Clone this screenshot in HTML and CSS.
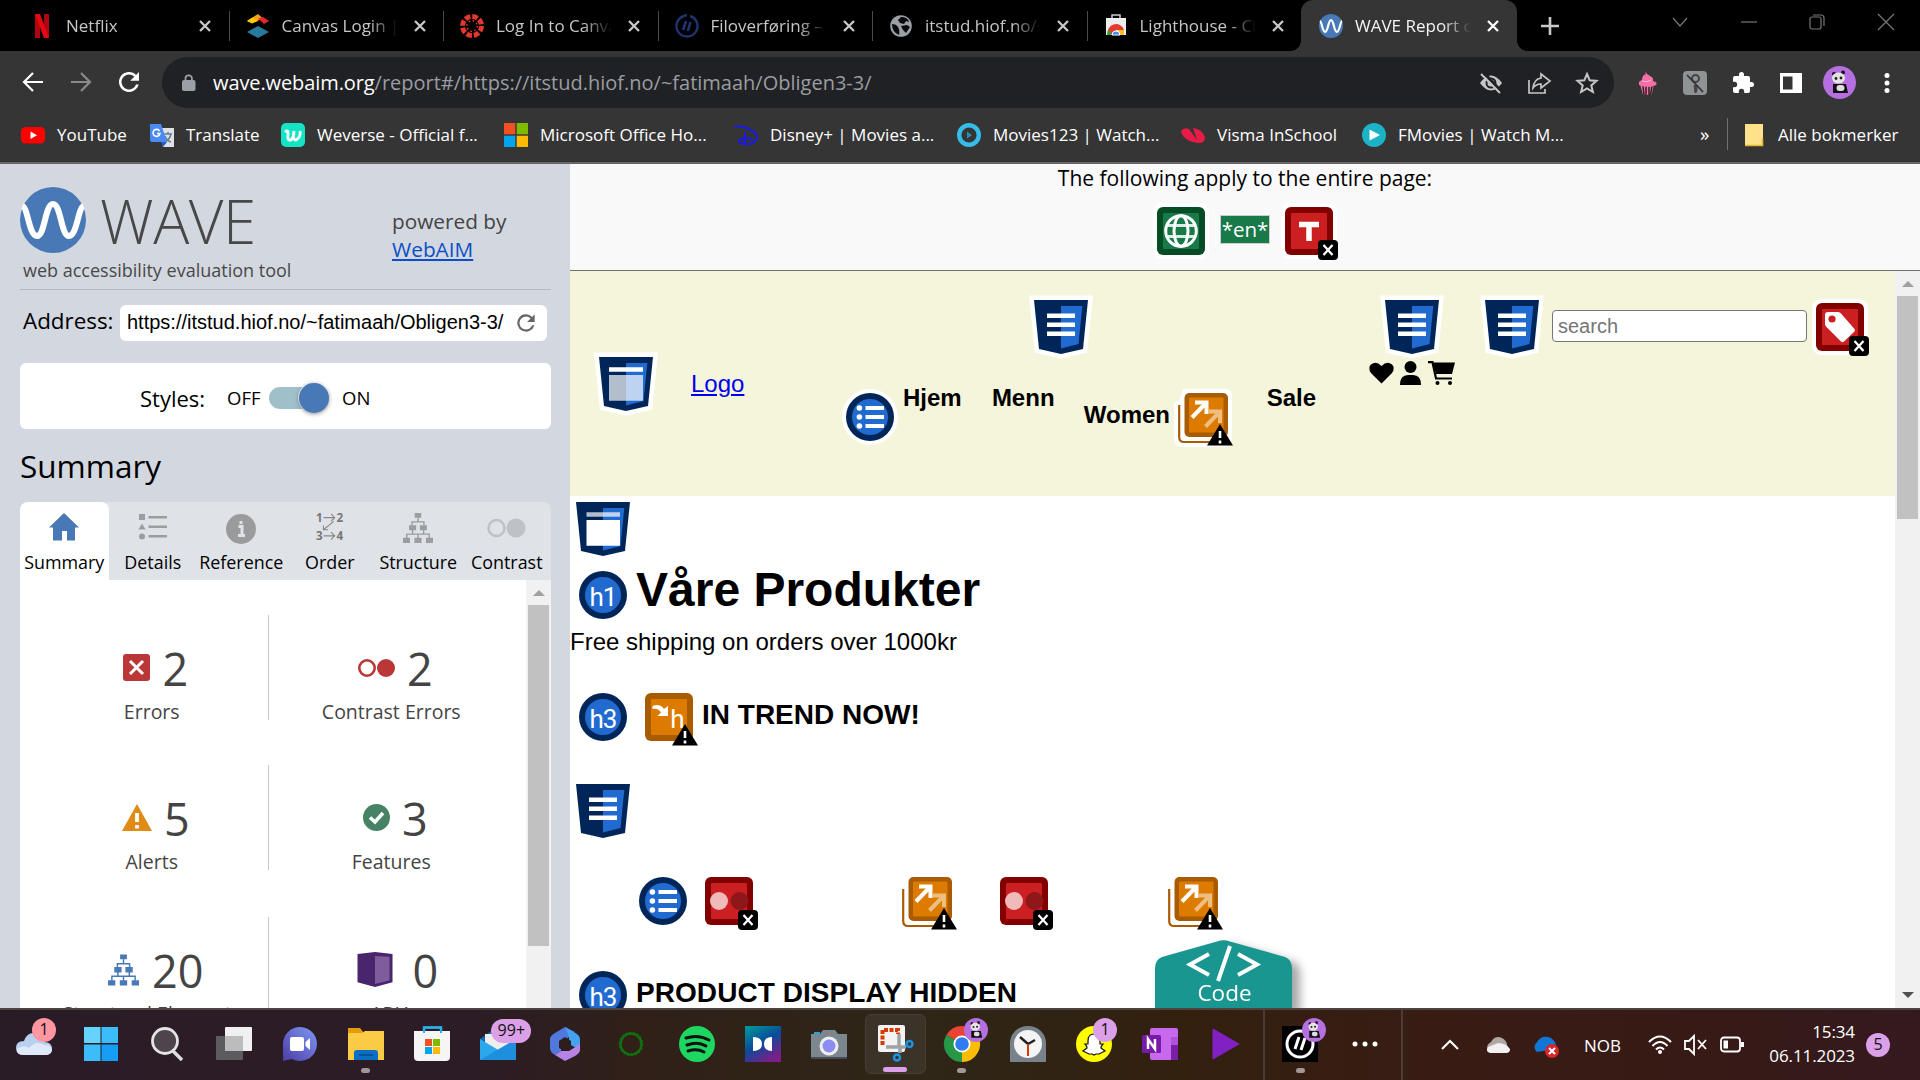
FILE: index.html
```html
<!DOCTYPE html>
<html lang="en">
<head>
<meta charset="utf-8">
<title>WAVE Report</title>
<link rel="stylesheet" href="styles.css">
</head>
<body>
<svg class="defs" width="0" height="0" aria-hidden="true">
  <symbol id="shield" viewBox="0 0 54 54" overflow="visible">
    <path d="M0 0H54L49 49L27 54L5 49Z" fill="#fff" stroke="#fff" stroke-width="9"/>
    <path d="M0 0H54L49 49L27 54L5 49Z" fill="#002659"/>
    <path d="M27 6H48.3L44.5 44L27 48.5Z" fill="#216bd0"/>
  </symbol>
  <symbol id="nav" viewBox="0 0 54 54" overflow="visible">
    <use href="#shield" width="54" height="54"/>
    <path d="M13 15.8H41M13 24.8H41M13 33.8H41" stroke="#fff" stroke-width="4.6"/>
  </symbol>
  <symbol id="list" viewBox="0 0 48 48" overflow="visible">
    <circle cx="24" cy="24" r="28" fill="#fff"/><circle cx="24" cy="24" r="24" fill="#002659"/><circle cx="24" cy="24" r="18" fill="#216bd0"/>
    <g fill="#fff"><circle cx="13.4" cy="15" r="2.8"/><circle cx="13.4" cy="24" r="2.8"/><circle cx="13.4" cy="33" r="2.8"/></g>
    <path d="M19.5 15H38M19.5 24H38M19.5 33H38" stroke="#fff" stroke-width="4"/>
  </symbol>
  <symbol id="warn" viewBox="0 0 26 22" overflow="visible">
    <path d="M13 0L26 21.5H0Z" fill="#000"/><path d="M13 7V14M13 16.4V19.4" stroke="#fff" stroke-width="2.6"/>
  </symbol>
  <symbol id="err" viewBox="0 0 20 20" overflow="visible">
    <rect width="20" height="20" rx="4" fill="#000"/><path d="M5.5 5L14.5 15M14.5 5L5.5 15" stroke="#fff" stroke-width="2.3"/>
  </symbol>
  <symbol id="red" viewBox="0 0 48 48" overflow="visible">
    <rect x="-4" y="-4" width="56" height="56" rx="9" fill="#fff"/><rect width="48" height="48" rx="6" fill="#820000"/><rect x="6" y="6" width="36" height="36" rx="1" fill="#cc1f22"/>
  </symbol>
  <symbol id="contrast" viewBox="0 0 48 48" overflow="visible">
    <use href="#red" width="48" height="48"/>
    <circle cx="14" cy="24" r="9" fill="#f0babb"/><circle cx="34.5" cy="24" r="9" fill="#8d1719"/>
    <use href="#err" x="33" y="33" width="20" height="20"/>
  </symbol>
  <symbol id="link" viewBox="0 0 50 50" overflow="visible">
    <path d="M5 -4H47Q54 -4 54 3V40Q54 54 46 54H4Q-4 54 -4 46V12Q-4 8 1 8Z" fill="#fff"/>
    <path d="M1.2 12V44Q1.2 49 6 49H44" fill="none" stroke="#a85b00" stroke-width="2.2"/>
    <rect x="6.5" width="43.5" height="44" rx="5" fill="#a85b00"/><rect x="11" y="4.5" width="34.5" height="35" rx="1" fill="#dd7b00"/>
    <g fill="none" stroke="#fff" stroke-width="4"><path opacity=".5" d="M31 18.5H42V30M42 18.5L27.5 33.5"/><path d="M17 9.5H28.5V21M28.5 9.5L14 24.5"/></g>
    <use href="#warn" x="29" y="31" width="26" height="22"/>
  </symbol>
  <symbol id="tree" viewBox="0 0 32 32">
    <path d="M12.5 0h7v5h-7zM6.5 13h7.5v5.5H6.5zM18 13h7.5v5.5H18zM0 26.5h7.5V32H0zM12.2 26.5h7.6V32h-7.6zM24.5 26.5H32V32h-7.500z" fill="currentColor"/>
    <path d="M16 5V9.500M9.700 13V9.500H22.300V13M10.200 18V22.500M22 18V22.500M4 27V22.500H28V27M16 22.500V27" stroke="currentColor" stroke-width="1.500" fill="none"/>
  </symbol>
  <symbol id="wavelogo" viewBox="0 0 66 66">
    <circle cx="33" cy="33" r="33" fill="#4878b6"/>
    <path d="M2.500 19C8 21 9 49 17 49S25 17 33 17S41 49 49 49S58 21 63.500 19" fill="none" stroke="#fff" stroke-width="6"/>
  </symbol>
  <symbol id="panda" viewBox="0 0 33 33">
    <circle cx="16.500" cy="16.500" r="16.500" fill="#b56fe0"/>
    <g fill="#111"><circle cx="11" cy="8" r="2"/><circle cx="20" cy="6.500" r="2"/><path d="M10 18h13l2 9h-15z"/></g>
    <ellipse cx="15.500" cy="12" rx="6.500" ry="5.500" fill="#e4e4e0"/><rect x="13.500" y="19" width="8" height="6" rx="3" fill="#ddd"/>
    <g fill="#222"><circle cx="13" cy="12.500" r="1.400"/><circle cx="18" cy="12" r="1.400"/></g>
  </symbol>
  <symbol id="reload" viewBox="0 0 24 24"><path d="M17.650 6.350A8 8 0 1 0 19.730 14h-2.080A6 6 0 1 1 12 6c1.660 0 3.140.69 4.220 1.780L13 11h7V4z" fill="currentColor"/></symbol>
  <symbol id="x" viewBox="0 0 14 14"><path d="M2 2L12 12M12 2L2 12" stroke="currentColor" stroke-width="2.300"/></symbol>
  <symbol id="hiof" viewBox="0 0 24 24"><path d="M9 2A10.500 10.500 0 1 0 15 2" fill="none" stroke="currentColor" stroke-width="2.400"/><path d="M9 1.800A10.500 10.500 0 0 1 12 1.300M11 7L8 16M15.500 8L12.800 17" stroke="currentColor" stroke-width="2.600" fill="none"/></symbol>
</svg>

<div class="screen">
  <header class="tabs">
    <div class="tab"><svg class="fav" viewBox="0 0 24 24"><path d="M5 0h5v24H5zM14 0h5v24h-5z" fill="#b1060f"/><path d="M5 0h5l9 24h-5z" fill="#e50914"/></svg><span class="title">Netflix</span><svg class="close"><use href="#x"/></svg></div>
    <div class="tab sep"><svg class="fav" viewBox="0 0 24 24"><path d="M1 7L12 0l5 4.500L6 9z" fill="#f9a11b"/><path d="M1 7l5.500-3.500L12 7 6 9.500z" fill="#fc0"/><path d="M12 4.500L17 3l6 4-5 3z" fill="#e8262b"/><path d="M12 12l11 6-11 6-11-6z" fill="#287a9f"/></svg><span class="title">Canvas Login | In</span><svg class="close"><use href="#x"/></svg></div>
    <div class="tab sep"><svg class="fav" viewBox="0 0 24 24"><circle cx="12" cy="12" r="9.500" fill="none" stroke="#e4382e" stroke-width="5" stroke-dasharray="5.500 1.960"/><circle cx="12" cy="12" r="5.200" fill="none" stroke="#e4382e" stroke-width="1.500" stroke-dasharray="1.500 2.580"/></svg><span class="title">Log In to Canvas</span><svg class="close"><use href="#x"/></svg></div>
    <div class="tab sep"><svg class="fav navy"><use href="#hiof"/></svg><span class="title">Filoverføring – H</span><svg class="close"><use href="#x"/></svg></div>
    <div class="tab sep"><svg class="fav" viewBox="0 0 24 24"><circle cx="12" cy="12" r="10.800" fill="#9aa0a6"/><path d="M3 10q4 0 6 3t1 8q-7-3-7-11zM12 3q7 0 8 5l-3-1-2 3-4-1-2-3zM12 12l6-1 3 2-4 6-3-3z" fill="#0a0a0a"/></svg><span class="title">itstud.hiof.no/~f</span><svg class="close"><use href="#x"/></svg></div>
    <div class="tab sep"><svg class="fav" viewBox="0 0 24 24"><path d="M8 4V1h8v3" fill="none" stroke="#ccc" stroke-width="1.500"/><path d="M2 4h20v17H2z" fill="#eee"/><path d="M4 21a8 8 0 0 1 16-5H12l-3 5z" fill="#e33b2e"/><path d="M4 16l5 5H3z" fill="#2ba24c"/><path d="M14 16h6v5h-6z" fill="#fbc116"/><path d="M8 21a4 4 0 0 1 8 0z" fill="#4285f4" stroke="#fff"/></svg><span class="title">Lighthouse - Chr</span><svg class="close"><use href="#x"/></svg></div>
    <div class="tab active"><svg class="fav"><use href="#wavelogo"/></svg><span class="title">WAVE Report of</span><svg class="close"><use href="#x"/></svg></div>
    <svg class="plus" viewBox="0 0 18 18"><path d="M9 0V18M0 9H18" stroke="#c8c8c8" stroke-width="2.600"/></svg>
    <div class="winctl">
      <svg viewBox="0 0 16 16"><path d="M1 4L8 12L15 4"/></svg>
      <svg viewBox="0 0 16 16"><path d="M0 8H16"/></svg>
      <svg viewBox="0 0 16 16"><rect x="1" y="3" width="11" height="12" rx="2"/><path d="M4 1H12Q15 1 15 4V12"/></svg>
      <svg viewBox="0 0 16 16"><path d="M0 0L16 16M16 0L0 16"/></svg>
    </div>
  </header>

  <div class="toolbar">
    <div class="navbtns">
      <svg viewBox="0 0 24 24"><path d="M22 12H3M12 3L3 12L12 21"/></svg>
      <svg class="dim" viewBox="0 0 24 24"><path d="M2 12H21M12 3L21 12L12 21"/></svg>
      <svg class="rl"><use href="#reload"/></svg>
    </div>
    <div class="omnibox">
      <svg class="lock" viewBox="0 0 14 18"><rect y="6" width="13.500" height="11" rx="2" fill="#9aa0a6"/><path d="M3.500 7V4.500a3.200 3.200 0 0 1 6.400 0V7" fill="none" stroke="#9aa0a6" stroke-width="1.800"/></svg>
      <span class="url"><b>wave.webaim.org</b>/report#/https://itstud.hiof.no/~fatimaah/Obligen3-3/</span>
      <div class="omni-icons">
        <svg viewBox="0 0 24 24"><path d="M1 12Q12-3 23 12Q12 27 1 12Z" fill="#c4c7c5"/><circle cx="12" cy="12" r="4.500" fill="none" stroke="#202124" stroke-width="2"/><path d="M4 1L23 21" stroke="#202124" stroke-width="3"/><path d="M2 3L21 22" stroke="#c4c7c5" stroke-width="2"/></svg>
        <svg viewBox="0 0 24 24"><path d="M2 9V22H18V18M14 3L23 10L14 17V13Q9 13 6 17Q7 8 14 7Z" fill="none" stroke="#c4c7c5" stroke-width="1.700"/></svg>
        <svg viewBox="0 0 24 24"><path d="M12 3L14.700 9.300L21.500 9.900L16.300 14.400L17.900 21L12 17.500L6.100 21L7.700 14.400L2.500 9.900L9.300 9.300Z" fill="none" stroke="#c4c7c5" stroke-width="2"/></svg>
      </div>
    </div>
    <div class="exts">
      <svg viewBox="0 0 24 24"><path d="M5 13h14l-2.500 11H8z" fill="#f46fa6"/><path d="M8 15l1 9M11 15v9M14 15v9M17 15l-1.500 9" stroke="#2b2226" stroke-width="1.500"/><path d="M10 0q2 4 5 5q4 2 3 5q5 1 3 4q-8 4-17 0q-1-4 3-5q0-5 4-6z" fill="#f46fa6"/><path d="M7 10q5 2 9-1" stroke="#fbd" fill="none"/></svg>
      <svg viewBox="0 0 24 24"><rect width="24" height="24" rx="4" fill="#8f9394"/><circle cx="12.500" cy="7.500" r="3.500" fill="none" stroke="#444" stroke-width="2"/><path d="M10.500 14h4v5l-1 3h-2z" fill="#444"/><path d="M4 4L20 21" stroke="#333" stroke-width="1.800"/></svg>
      <svg viewBox="0 0 24 24"><path d="M20.500 11H19V7a2 2 0 0 0-2-2h-4V3.500a2.500 2.500 0 0 0-5 0V5H4a2 2 0 0 0-2 2v3.800h1.500a2.700 2.700 0 0 1 0 5.400H2V20a2 2 0 0 0 2 2h3.800v-1.500a2.700 2.700 0 0 1 5.400 0V22H17a2 2 0 0 0 2-2v-4h1.500a2.500 2.500 0 0 0 0-5z" fill="#fff"/></svg>
      <svg viewBox="0 0 24 24"><path d="M1 2H23V22H1Z" fill="#fff"/><path d="M4 5.500H13.500V18.500H4Z" fill="#353535"/></svg>
      <svg class="avatar"><use href="#panda"/></svg>
      <svg viewBox="0 0 24 24"><g fill="#fff"><circle cx="12" cy="4.500" r="2.500"/><circle cx="12" cy="12" r="2.500"/><circle cx="12" cy="19.500" r="2.500"/></g></svg>
    </div>
  </div>

  <div class="bookmarks">
    <div class="bm"><svg viewBox="0 0 24 24"><rect y="4" width="24" height="16.500" rx="4.500" fill="#f00"/><path d="M9.500 8.500L16 12.200L9.500 16z" fill="#fff"/></svg>YouTube</div>
    <div class="bm"><svg viewBox="0 0 24 24"><path d="M8 5h16v19H13z" fill="#dfe1e5"/><path d="M14 11h8M18 9v2M21 11q-1 5-6 8M15 13q2 5 6 6" stroke="#5f7d95" fill="none" stroke-width="1.500"/><path d="M0 1h11l6 18H2q-2 0-2-2z" fill="#4a8af4"/><path d="M11 19h6l-4 5z" fill="#2a56c6"/><path d="M9.500 8A3.500 3.500 0 1 0 10 10.500H7" fill="none" stroke="#fff" stroke-width="1.600"/></svg>Translate</div>
    <div class="bm"><svg viewBox="0 0 24 24"><rect width="24" height="24" rx="5" fill="#14e3c5"/><path d="M4 9Q8 6 7 12T10 17Q13 14 13 8Q11 17 15 17Q20 14 19 8" fill="none" stroke="#fff" stroke-width="2.800"/></svg>Weverse - Official f...</div>
    <div class="bm"><svg viewBox="0 0 24 24"><path d="M0 0h11.300v11.300H0z" fill="#f25022"/><path d="M12.700 0H24v11.300H12.700z" fill="#7fba00"/><path d="M0 12.700h11.300V24H0z" fill="#00a4ef"/><path d="M12.700 12.700H24V24H12.700z" fill="#ffb900"/></svg>Microsoft Office Ho...</div>
    <div class="bm"><svg viewBox="0 0 24 24"><path d="M1 5Q2 2 10 4Q23 8 23 15Q20 24 6 20Q2 16 12 15Q18 15 18 18M11 9V22" fill="none" stroke="#1a1ae6" stroke-width="2"/></svg>Disney+ | Movies a...</div>
    <div class="bm"><svg viewBox="0 0 24 24"><circle cx="12" cy="12" r="9.800" fill="none" stroke="#35bce8" stroke-width="4.400"/><path d="M10 8.500L15 12l-5 3.500z" fill="#2b8db0"/></svg>Movies123 | Watch...</div>
    <div class="bm"><svg viewBox="0 0 24 24"><path d="M0 8Q3 4 8 6L16 17L12 5Q21 6 24 14Q24 20 18 20Q7 19 2 13Q0 10 0 8Z" fill="#e81c46"/></svg>Visma InSchool</div>
    <div class="bm"><svg viewBox="0 0 24 24"><circle cx="12" cy="12" r="12" fill="#1cb3c8"/><path d="M7.500 6.500L18 12L7.500 17.500z" fill="#fff"/></svg>FMovies | Watch M...</div>
    <div class="more">»</div>
    <div class="bm all"><svg viewBox="0 0 24 24"><path d="M3 1h18v14l-1 1v7H3z" fill="#ffe28a"/><path d="M3 22.500H20.500V15" fill="none" stroke="#e8b931" stroke-width="1.600"/></svg>Alle bokmerker</div>
  </div>

  <main class="main">
    <aside class="side">
      <div class="brand">
        <svg class="logo"><use href="#wavelogo"/></svg>
        <div class="wordmark">WAVE</div>
        <div class="powered">powered by<br><a>WebAIM</a></div>
      </div>
      <div class="tagline">web accessibility evaluation tool</div>
      <div class="address"><label>Address:</label><div class="field"><span>https://itstud.hiof.no/~fatimaah/Obligen3-3/</span><svg><use href="#reload"/></svg></div></div>
      <div class="styles"><span class="lbl">Styles:</span><span class="off">OFF</span><span class="switch"><i></i></span><span class="on">ON</span></div>
      <h2 class="heading">Summary</h2>
      <nav class="wtabs">
        <div class="wtab sel"><svg viewBox="0 0 30 28"><path d="M15 0L30 14.500H26V27.500H18V18H13V27.500H4V14.500H0Z" fill="#4878b6"/></svg>Summary</div>
        <div class="wtab"><svg viewBox="0 0 30 28"><g fill="#9b9da0"><path d="M1 1h6v6H1zM4 10.500l3.500 6h-7z"/><circle cx="4" cy="23.500" r="3"/><path d="M10.500 3H29v2.500H10.500zM10.500 12.500H29V15H10.500zM10.500 22H29v2.500H10.500z"/></g></svg>Details</div>
        <div class="wtab"><svg class="info" viewBox="0 0 30 30"><circle cx="15" cy="15" r="15" fill="#999b9d"/><path d="M12.500 12.500H16V21M12 21.500H19M15 7V10" stroke="#dfe3e8" stroke-width="3" fill="none"/></svg>Reference</div>
        <div class="wtab"><svg class="ord" viewBox="0 0 30 30"><g font-family="Open Sans, sans-serif" font-weight="700" font-size="12.500" fill="#777"><text x="0" y="9.500">1</text><text x="22" y="9.500">2</text><text x="0" y="29">3</text><text x="22" y="29">4</text></g><path d="M8 5H20M16 1L20 5L16 9M8 24.500H20M16 20.500L20 24.500L16 28.500M19 9L8 18M8 13.500V18H13" stroke="#888" stroke-width="1.200" fill="none"/></svg>Order</div>
        <div class="wtab"><svg class="grey"><use href="#tree"/></svg>Structure</div>
        <div class="wtab"><svg class="wide" viewBox="0 0 39 20"><circle cx="9.500" cy="10" r="8" fill="none" stroke="#bec1c5" stroke-width="2.500"/><circle cx="29" cy="10" r="9.500" fill="#bec1c5"/></svg>Contrast</div>
      </nav>
      <div class="panel">
        <div class="stats">
          <div class="stat"><p><svg viewBox="0 0 27 27"><rect width="27" height="27" rx="3" fill="#ba3637"/><path d="M7 7L20 20M20 7L7 20" stroke="#fff" stroke-width="3"/></svg>2</p><span>Errors</span></div>
          <div class="stat"><p><svg class="w37" viewBox="0 0 37 18"><circle cx="9" cy="9" r="7.700" fill="none" stroke="#ba3637" stroke-width="2.600"/><circle cx="28" cy="9" r="9" fill="#ba3637"/></svg>2</p><span>Contrast Errors</span></div>
          <div class="stat"><p><svg class="w30" viewBox="0 0 30 27"><path d="M15 0L30 27H0Z" fill="#e08b14"/><path d="M15 9V18M15 21V24.500" stroke="#fff" stroke-width="3.800"/></svg>5</p><span>Alerts</span></div>
          <div class="stat"><p><svg viewBox="0 0 27 27"><circle cx="13.500" cy="13.500" r="13.500" fill="#458364"/><path d="M7 13.500L12 18L20 9" stroke="#fff" stroke-width="3.500" fill="none"/></svg>3</p><span>Features</span></div>
          <div class="stat third"><p><svg class="w32 blue"><use href="#tree"/></svg>20</p><span>Structural Elements</span></div>
          <div class="stat third"><p><svg class="w36" viewBox="0 0 36 36"><path d="M0 2L18 0L36 2V31L18 36L0 31Z" fill="#49256d"/><path d="M18 4L33 5V29L18 33Z" fill="#7f5c9c"/></svg>0</p><span>ARIA</span></div>
        </div>
        <div class="scroll"><i class="up"></i><div class="thumb"></div></div>
      </div>
    </aside>

    <section class="report">
      <div class="banner">
        <p>The following apply to the entire page:</p>
        <div class="row">
          <svg class="i48" viewBox="0 0 48 48"><rect x="-4" y="-4" width="56" height="56" rx="9" fill="#fff"/><rect width="48" height="48" rx="6" fill="#064d25"/><rect x="6" y="6" width="36" height="36" rx="1" fill="#187a48"/><g fill="none" stroke="#fff" stroke-width="3"><circle cx="24" cy="24" r="15.300"/><ellipse cx="24" cy="24" rx="7" ry="15.300"/><path d="M10.500 18.500H37.500M10.500 29.500H37.500" opacity=".85"/></g></svg>
          <span class="lang">*en*</span>
          <svg class="i48" viewBox="0 0 48 48"><use href="#red" width="48" height="48"/><path d="M14 17.500H34M24 17.500V34" stroke="#fff" stroke-width="5.500"/><use href="#err" x="33" y="33" width="20" height="20"/></svg>
        </div>
      </div>
      <div class="view">
        <div class="page">
          <div class="site-header">
            <svg class="i54 h-shield" viewBox="0 0 54 54"><use href="#shield" width="54" height="54"/><path d="M10 12.500H44" stroke="#fff" stroke-width="4.600"/><path d="M10 18H44V43.700H10Z" fill="#fff" opacity=".7"/></svg>
            <a class="site-logo">Logo</a>
            <div class="nav">
              <svg class="i54"><use href="#nav"/></svg>
              <div class="menu">
                <svg class="i48"><use href="#list"/></svg><b class="m1">Hjem</b><b class="m2">Menn</b><b class="m3">Women</b><svg class="i50"><use href="#link"/></svg><b class="m4">Sale</b>
              </div>
            </div>
            <div class="tools">
              <svg class="i54"><use href="#nav"/></svg>
              <div class="glyphs">
                <svg viewBox="0 0 25 24"><path d="M12.500 22.500L2 12Q-1.500 7 2 3.500Q7-.500 12.500 5Q18-.500 23 3.500Q26.500 7 23 12Z"/></svg>
                <svg class="g2" viewBox="0 0 21 24"><circle cx="10.500" cy="6" r="6"/><path d="M0 24Q0 14 8 14H13Q21 14 21 24Z"/></svg>
                <svg class="g3" viewBox="0 0 27 24"><path d="M5 1.500H27L24 13H8Z"/><path d="M0 1.200H4.500L8 17.500H24" fill="none" stroke="#000" stroke-width="2.200"/><circle cx="9.500" cy="22" r="2"/><circle cx="22" cy="22" r="2"/></svg>
              </div>
            </div>
            <svg class="i54 s-shield"><use href="#nav"/></svg>
            <div class="search">search</div>
            <svg class="i48 tag" viewBox="0 0 48 48"><use href="#red" width="48" height="48"/><path d="M9 12Q9 9 12 9H22Q24 9 25 10.500L38.500 26Q39.500 27 38.500 28.500L28 38.500Q26.500 40 25 38.500L10.500 24Q9 22.500 9 21Z" fill="#fff"/><circle cx="16" cy="16" r="3.600" fill="#cc1f22"/><use href="#err" x="33" y="33" width="20" height="20"/></svg>
          </div>
          <div class="content">
            <svg class="i54 c-shield" viewBox="0 0 54 54"><use href="#shield" width="54" height="54"/><path d="M10.500 12.500H44" stroke="#fff" stroke-width="4.600" opacity=".7"/><path d="M10.500 18H44V43.700H10.500Z" fill="#fff"/></svg>
            <div class="line l1"><svg class="i48 hx" viewBox="0 0 48 48"><circle cx="24" cy="24" r="24" fill="#002659"/><circle cx="24" cy="24" r="18" fill="#216bd0"/><text x="24" y="34.500" class="hn">h1</text></svg><h1>Våre Produkter</h1></div>
            <p class="ship">Free shipping on orders over 1000kr</p>
            <div class="line l2"><svg class="i48 hx" viewBox="0 0 48 48"><circle cx="24" cy="24" r="24" fill="#002659"/><circle cx="24" cy="24" r="18" fill="#216bd0"/><text x="24" y="34.500" class="hn">h3</text></svg><svg class="i48" viewBox="0 0 48 48"><rect width="48" height="48" rx="6" fill="#a85b00"/><rect x="6" y="6" width="36" height="36" rx="1" fill="#dd7b00"/><text x="32" y="34.500" class="hn">h</text><path d="M7.500 13Q15 10 19 16L23 13V23H12.500L16 19.500Q13 14.500 7.500 16Z" fill="#fff"/><use href="#warn" x="27" y="31" width="26" height="22"/></svg><h3>IN TREND NOW!</h3></div>
            <svg class="i54 c-nav"><use href="#nav"/></svg>
            <div class="issues"><svg class="i48"><use href="#list"/></svg><svg class="i48 a1"><use href="#contrast"/></svg><svg class="i50 a2"><use href="#link"/></svg><svg class="i48 a3"><use href="#contrast"/></svg><svg class="i50 a4"><use href="#link"/></svg></div>
            <div class="line l3"><svg class="i48 hx" viewBox="0 0 48 48"><circle cx="24" cy="24" r="24" fill="#002659"/><circle cx="24" cy="24" r="18" fill="#216bd0"/><text x="24" y="34.500" class="hn">h3</text></svg><h3>PRODUCT DISPLAY HIDDEN</h3></div>
          </div>
        </div>
        <div class="vscroll"><i class="up"></i><div class="thumb"></div><i class="down"></i></div>
      </div>
      <div class="code"><svg viewBox="0 0 137 70"><path d="M0 70V28Q0 20 7 17L62 1.500Q68.500-1 75 1.500L130 17Q137 20 137 28V70Z" fill="#18968f"/><path d="M54 14L35 24.500L54 35M83 14L102 24.500L83 35M75 6L63 41" fill="none" stroke="#fff" stroke-width="4"/></svg><span>Code</span></div>
    </section>
  </main>

  <footer class="taskbar">
    <div class="apps">
      <div class="app weather"><svg viewBox="0 0 36 36"><path d="M8 29Q0 29 0 22Q0 15 8 15Q11 6 19 7Q27 8 28 16Q36 16 36 23Q36 29 29 29Z" fill="#b9cff0"/><path d="M8 29Q0 29 1 23Q8 18 13 22Q20 14 28 19Q36 19 36 24Q35 29 29 29Z" fill="#dfe9f9"/></svg><b class="badge pink">1</b></div>
      <div class="app"><svg viewBox="0 0 36 36"><g fill="#3cbcfb"><path d="M1 1H17.500V17H1z" fill="#64d3fd"/><path d="M18.500 1H35V17H18.500z"/><path d="M1 18.500H17.500V35H1z"/><path d="M18.500 18.500H35V35H18.500z" fill="#169df6"/></g></svg></div>
      <div class="app"><svg viewBox="0 0 36 36"><circle cx="16" cy="15" r="12.500" fill="#4d444c" stroke="#e4e4e4" stroke-width="2.800"/><path d="M24 25L33 34" stroke="#ddd" stroke-width="3.500"/></svg></div>
      <div class="app"><svg viewBox="0 0 36 36"><rect y="10" width="27" height="24" rx="1" fill="#5c5b5d"/><rect x="9" y="1" width="27" height="24" rx="1" fill="#f0f0f0"/><path d="M9 10H27V25H9z" fill="#bcbcbc"/></svg></div>
      <div class="app"><svg viewBox="0 0 36 36"><defs><linearGradient id="tg" x1="1" x2="0" y2="1"><stop stop-color="#7d9af0"/><stop offset=".6" stop-color="#6160c8"/><stop offset="1" stop-color="#4a3fa0"/></linearGradient></defs><path d="M18 1A17 17 0 1 1 10 33L1 35V18A17 17 0 0 1 18 1Z" fill="url(#tg)"/><rect x="8" y="11" width="14" height="14" rx="2" fill="#fff"/><path d="M23.500 16L28 12V24L23.500 20Z" fill="#fff"/></svg></div>
      <div class="app run"><svg viewBox="0 0 36 36"><path d="M0 2H12L16 7H0z" fill="#e29c0c"/><path d="M0 7L14 7L17 5H36V34H0z" fill="#fccb45"/><path d="M6 34V27Q6 24 9 24H27Q30 24 30 27V34z" fill="#0b70c4"/><path d="M11 29H25" stroke="#064a8a" stroke-width="1.500"/></svg></div>
      <div class="app"><svg viewBox="0 0 36 36"><path d="M10 8V1.500H27V8" fill="none" stroke="#27b1ee" stroke-width="2.500"/><path d="M0 5H36V31Q36 35 32 35H4Q0 35 0 31z" fill="#f5f5f5"/><path d="M10 7V1.500H27V7" fill="none" stroke="#27b1ee" stroke-width="2"/><path d="M11 13h7v7h-7z" fill="#f25022"/><path d="M19 13h7v7h-7z" fill="#7fba00"/><path d="M11 21h7v7h-7z" fill="#00a4ef"/><path d="M19 21h7v7h-7z" fill="#ffb900"/></svg></div>
      <div class="app"><svg viewBox="0 0 36 36"><path d="M0 13L18 0L36 13V34H0z" fill="#0f66b4"/><path d="M5 8H31V22L18 27L5 18z" fill="#eee"/><path d="M0 13L20 25L36 17V34H0z" fill="#2ba8ec"/><path d="M0 34L36 13V34z" fill="#1d8fdd"/></svg><b class="badge wide99">99+</b></div>
      <div class="app"><svg viewBox="0 0 36 36"><path d="M18 1L28 6L22 11Q14 16 14 25L8 29Q3 26 3 22V13Q3 10 8 7z" fill="#5178dd"/><path d="M18 1L30 8Q33 10 33 14V24L22 18V11z" fill="#43a3ee"/><path d="M14 25L22 25L33 18V24Q33 27 28 30L18 35L8 29z" fill="#b783e6"/><path d="M18 11L24 15V22L18 25L12 22V15z" fill="#2b1e1c"/></svg></div>
      <div class="app"><svg viewBox="0 0 36 36"><circle cx="18" cy="18" r="10.500" fill="none" stroke="#107010" stroke-width="2.500"/><circle cx="18" cy="18" r="11.500" fill="none" stroke="#107010" stroke-width="1.500" stroke-dasharray="2 2"/></svg></div>
      <div class="app"><svg viewBox="0 0 36 36"><circle cx="18" cy="18" r="18" fill="#1ed760"/><path d="M7 12Q19 8 30 14M8 19Q19 15 27 20M9 25Q18 22 25 26" fill="none" stroke="#111" stroke-width="3" stroke-linecap="round"/></svg></div>
      <div class="app"><svg viewBox="0 0 36 36"><defs><linearGradient id="dg" x2=".6" y2="1"><stop stop-color="#009e9a"/><stop offset=".55" stop-color="#0a4a9a"/><stop offset="1" stop-color="#7a1f8a"/></linearGradient></defs><path d="M0 0H36V36H0z" fill="url(#dg)"/><path d="M8 11Q17 11 17 18T8 25zM27 11Q19 11 19 18T27 25z" fill="#fff"/></svg></div>
      <div class="app"><svg viewBox="0 0 36 36"><path d="M3 6H9V10H3z" fill="#28a2e0"/><path d="M0 8H9L12 4H24L27 8H36V33H0z" fill="#7c868f"/><path d="M0 31H36V33H0z" fill="#444b52"/><circle cx="18" cy="20" r="9.500" fill="#eee"/><circle cx="18" cy="20" r="6.500" fill="#8c8df0"/></svg></div>
      <div class="app on"><svg viewBox="0 0 36 36"><rect width="27" height="27" rx="2" fill="#f3f3f3"/><path d="M4.500 20V5H20V9" fill="none" stroke="#d83b01" stroke-width="4" stroke-dasharray="4 1.500"/><path d="M21 9V22L28 22M8 22H22V28" fill="none" stroke="#9ea3a8" stroke-width="3.500"/><g fill="none" stroke="#1b93e0" stroke-width="2.500"><circle cx="31.500" cy="19" r="3"/><circle cx="19" cy="32.500" r="3"/></g></svg></div>
      <div class="app run"><svg viewBox="0 0 36 36"><path d="M18 18L2.400 9A18 18 0 0 1 33.600 9z" fill="#ea4335"/><path d="M18 18L33.600 9A18 18 0 0 1 18 36z" fill="#fbbc05"/><path d="M18 18V36A18 18 0 0 1 2.400 9z" fill="#279847"/><circle cx="18" cy="18" r="8.500" fill="#fff"/><circle cx="18" cy="18" r="6.800" fill="#2f7cf0"/></svg><svg class="pb"><use href="#panda"/></svg></div>
      <div class="app"><svg viewBox="0 0 36 36"><path d="M0 36V17A18 17 0 0 1 36 17V36z" fill="#78828a"/><circle cx="18" cy="18" r="14" fill="#f4f4f4"/><path d="M10 11L18 18L25 14" fill="none" stroke="#222" stroke-width="2.500"/><path d="M18 18V30" stroke="#d83b01" stroke-width="2"/></svg></div>
      <div class="app"><svg viewBox="0 0 36 36"><circle cx="18" cy="18" r="18" fill="#fffc00"/><path d="M18 8Q24 8 24 15V18L27 18Q25 20 25 22L29 25L23 28H20L18 29L16 28H13L7 25L11 22Q11 20 9 18L12 18V15Q12 8 18 8Z" fill="#fff" stroke="#111" stroke-width="1.200"/></svg><b class="badge">1</b></div>
      <div class="app"><svg viewBox="0 0 36 36"><rect x="8" y="2" width="28" height="32" rx="2" fill="#c868ec"/><path d="M29 11H36V19H29z" fill="#b052e0"/><path d="M29 19H36V34H29z" fill="#7a1fa8"/><rect y="9" width="19" height="18" rx="1.500" fill="#7719aa"/><path d="M6 23V13L13 23V13" fill="none" stroke="#fff" stroke-width="2.500"/></svg></div>
      <div class="app"><svg viewBox="0 0 36 36"><path d="M5 3L31 18L5 33z" fill="#8121c4" stroke="#8121c4"/></svg></div>
    </div>
    <div class="apps second">
      <div class="app run"><svg viewBox="0 0 36 36"><path d="M0 0H36V36H0z"/><g fill="none" stroke="#fff" stroke-width="3"><circle cx="18" cy="18" r="13"/><path d="M17 11L13 23M23 12L19 24"/></g></svg><svg class="pb"><use href="#panda"/></svg></div>
      <div class="app"><svg viewBox="0 0 36 36"><g fill="#fff"><circle cx="7" cy="18" r="2.500"/><circle cx="17" cy="18" r="2.500"/><circle cx="27" cy="18" r="2.500"/></g></svg></div>
    </div>
    <div class="tray">
      <svg class="t1" viewBox="0 0 24 24"><path d="M4 16L12 8L20 16" fill="none" stroke="#fff" stroke-width="2"/></svg>
      <svg class="t2" viewBox="0 0 24 24"><path d="M2 19Q-1 12 5 9Q9 2 16 5Q21 8 21 12L24 18z" fill="#b0a6a3"/><path d="M4 20Q-1 18 2 14L12 10Q20 10 24 16Q24 20 20 20z" fill="#f2f0f0"/></svg>
      <svg class="t3" viewBox="0 0 24 24"><path d="M3 19Q-2 14 3 9Q8 1 17 5Q23 9 22 16z" fill="#1177d6"/><circle cx="18" cy="18" r="7" fill="#d6262c"/><path d="M15 15L21 21M21 15L15 21" stroke="#fff" stroke-width="2"/></svg>
      <span class="nob">NOB</span>
      <svg class="t4" viewBox="0 0 24 24"><g fill="none" stroke="#fff" stroke-width="2"><path d="M1 9Q12-2 23 9M4.500 13Q12 5 19.500 13M8 16.500Q12 12.500 16 16.500"/></g><circle cx="12" cy="19" r="2" fill="#fff"/></svg>
      <svg class="t5" viewBox="0 0 24 24"><path d="M1 8H5L10 3V21L5 16H1ZM14 7L22 16M22 7L14 16" fill="none" stroke="#fff" stroke-width="1.800"/></svg>
      <svg class="t6" viewBox="0 0 24 24"><rect x="1" y="4.500" width="19" height="14" rx="3" fill="none" stroke="#fff" stroke-width="1.800"/><path d="M3.500 7.500H8V15.500H3.500zM21 9H24V14H21z" fill="#fff"/></svg>
      <div class="clock">15:34<br>06.11.2023</div>
      <b class="count">5</b>
    </div>
  </footer>
</div>
</body>
</html>
```
FILE: styles.css
```css
* { box-sizing: border-box; }
body { margin: 0; overflow: hidden; font-family: "Open Sans", "Noto Sans", sans-serif; }
svg { display: block; overflow: visible; flex: none; }
.defs { position: absolute; }
p, h1, h2, h3 { margin: 0; }
.screen { width: 1920px; height: 1080px; display: flex; flex-direction: column; overflow: hidden; }

/* browser tab strip */
.tabs { height: 51px; flex: none; background: #000; display: flex; align-items: center; padding-left: 14px; }
.tab { width: 214.5px; height: 51px; flex: none; display: flex; align-items: center; padding-left: 16px; color: #c6c6c6; font-size: 17px; position: relative; }
.tab.sep::before { content: ""; position: absolute; left: 0; top: 11px; width: 1px; height: 30px; background: #4a4a4a; }
.tab.sep { padding-left: 17px; }
.fav { width: 24px; height: 24px; }
.navy { color: #1f3470; }
.title { width: 116px; margin-left: 12px; white-space: nowrap; overflow: hidden; -webkit-mask-image: linear-gradient(90deg, #000 75%, transparent 100%); mask-image: linear-gradient(90deg, #000 75%, transparent 100%); }
.close { width: 14px; height: 14px; margin-left: 16px; color: #c9c9c9; }
.sep .close { margin-left: 15px; }
.tab.active { background: #353535; border-radius: 12px 12px 0 0; color: #f4f4f4; width: 216px; padding-left: 18px; }
.active .close { color: #fff; margin-left: 15px; }
.tab.active::before, .tab.active::after { content: ""; position: absolute; bottom: 0; width: 10px; height: 10px; }
.tab.active::before { left: -10px; background: radial-gradient(circle at 0 0, #000 9.500px, #353535 10px); }
.tab.active::after { right: -10px; background: radial-gradient(circle at 100% 0, #000 9.500px, #353535 10px); }
.plus { width: 18px; height: 18px; margin-left: 24px; }
.winctl { display: flex; gap: 52.600px; margin-left: 113px; padding-bottom: 8px; }
.winctl svg { width: 16px; height: 16px; fill: none; stroke: #777; stroke-width: 1.200; }

/* toolbar */
.toolbar { height: 63px; flex: none; background: #353535; display: flex; align-items: center; }
.navbtns { display: flex; gap: 24px; padding-left: 21px; width: 162px; }
.navbtns svg { width: 24px; height: 24px; fill: none; stroke: #fff; stroke-width: 2.200; margin-top: 1px; }
.navbtns .dim { stroke: #8b8b8b; }
.navbtns .rl { width: 30px; height: 30px; margin: -2px 0 0 -3px; color: #fff; stroke: none; }
.omnibox { width: 1452px; height: 51px; border-radius: 26px; background: #202124; display: flex; align-items: center; padding-left: 20px; }
.lock { width: 14px; height: 18px; }
.url { margin-left: 17px; font-size: 20px; color: #9a9da1; line-height: 28px; width: 1266px; }
.url b { font-weight: 400; color: #fff; letter-spacing: -.1px; }
.omni-icons { display: flex; gap: 24px; }
.omni-icons svg, .exts svg { width: 24px; height: 24px; }
.exts { display: flex; align-items: center; gap: 24px; margin-left: 21px; }
.exts .avatar { width: 33px; height: 33px; margin: 0 -4.500px; }

/* bookmarks bar */
.bookmarks { height: 50px; flex: none; background: #353535; border-bottom: 2px solid #676767; display: grid; grid-template-columns: 129px 131px 223px 230px 223px 224px 181px 338px 19px 1fr; padding: 0 0 8px 21px; align-items: center; color: #fff; font-size: 17px; }
.bm { display: flex; align-items: center; gap: 12px; white-space: nowrap; }
.bm svg { width: 24px; height: 24px; margin-top: 2px; }
.more { font-size: 19px; }
.all { border-left: 1px solid #707070; height: 32px; padding-left: 14px; margin-left: 8px; }

/* WAVE side panel */
.main { height: 844px; flex: none; display: flex; }
.side { width: 570px; background: #d3d8e0; padding: 23px 19px 0 20px; display: flex; flex-direction: column; color: #000; }
.brand { display: flex; height: 66px; }
.logo { width: 66px; height: 66px; }
.wordmark { margin-left: 14px; width: 292px; font-size: 60px; font-weight: 300; letter-spacing: -.400px; line-height: 68px; color: #484848; }
.powered { font-size: 20.800px; line-height: 28px; padding-top: 20px; color: #444; white-space: nowrap; }
.powered a { color: #0b4fc8; text-decoration: underline; }
.tagline { font-size: 18px; color: #484848; height: 37px; line-height: 35px; padding-left: 3px; border-bottom: 1px solid #b4b8bc; white-space: nowrap; }
.address { display: flex; height: 36px; margin-top: 15px; font-size: 22.400px; line-height: 32px; padding-left: 3px; }
.address label { width: 97px; }
.field { width: 427px; background: #fff; border-radius: 6px; display: flex; align-items: center; padding-left: 7px; font: 20px/36px "Liberation Sans", Arial, sans-serif; }
.field span { width: 386px; white-space: nowrap; margin-top: -2px; }
.field svg { width: 26px; height: 26px; color: #666; }
.styles { height: 66px; margin-top: 22px; background: #fff; border-radius: 6px; display: flex; align-items: center; padding: 3px 0 0 120px; font-size: 18.500px; }
.styles .lbl { font-size: 22px; width: 87px; }
.off { width: 42px; }
.switch { width: 60px; height: 22px; border-radius: 11px; background: #9fc0c9; display: flex; align-items: center; justify-content: flex-end; margin-top: 1px; }
.switch i { width: 30px; height: 30px; flex: none; border-radius: 50%; background: #4878b6; box-shadow: 0 1px 4px rgba(0,0,0,.45), 0 0 0 1px #fff; }
.on { margin-left: 13px; }
.heading { font-size: 31.500px; font-weight: 400; line-height: 42px; margin-top: 16px; height: 57px; }
.wtabs { display: flex; height: 78px; background: #dfe3e8; border-radius: 8px 8px 0 0; }
.wtab { width: 88.500px; display: flex; flex-direction: column; align-items: center; font-size: 17.900px; line-height: 24px; padding-top: 12px; }
.wtab svg { width: 30px; height: 28px; margin: -1px 0 9px; }
.wtab .info { height: 30px; margin: 0 0 6px; }
.wtab .grey { width: 32px; color: #9b9da0; height: 30px; margin-bottom: 7px; }
.wtab .wide { width: 39px; margin: 0 0 8px; }
.wtab.sel { background: #fff; border-radius: 8px 8px 0 0; }
.panel { height: 428px; background: #fff; display: flex; overflow: hidden; }
.stats { width: 506px; display: grid; grid-template-columns: 232.500px 245.500px; grid-auto-rows: 105px; row-gap: 45px; padding: 35px 0 0 16px; }
.stat { display: flex; flex-direction: column; align-items: center; color: #444; font-size: 19.500px; line-height: 28px; padding-top: 24px; }
.stat:nth-child(odd) { border-right: 1px solid #c6c6c6; }
.stat.third { margin-top: 2px; height: 105px; }
.stat p { display: flex; align-items: center; gap: 12px; font-size: 45px; line-height: 60px; height: 60px; padding-left: 8px; }
.stat p svg { width: 27px; height: 27px; margin-top: -3px; }
.stat span { margin-top: -1px; white-space: nowrap; }
.stat p .w37 { width: 37px; height: 18px; }
.stat p .w30 { width: 30px; }
.stat p .w32 { width: 31px; height: 32px; color: #4878b6; margin-right: 1px; }
.stat p .w36 { width: 36px; height: 35px; margin-right: 7px; margin-left: 5px; }
.scroll, .vscroll { width: 25px; background: #f1f1f1; display: flex; flex-direction: column; align-items: center; }
.up, .down { width: 0; height: 0; border: 6px solid transparent; border-top: 0; border-bottom: 6px solid #a0a0a0; }
.scroll .up { margin-top: 10px; }
.thumb { width: 21px; background: #c1c1c1; }
.scroll .thumb { margin-top: 9px; height: 341px; }

/* report */
.report { width: 1350px; position: relative; background: #fff; display: flex; flex-direction: column; }
.banner { height: 107px; background: #f9f9f9; border-bottom: 1px solid #6f736f; text-align: center; font-size: 21px; }
.banner p { line-height: 29px; height: 43px; }
.row { display: flex; justify-content: center; align-items: center; gap: 15px; height: 48px; }
.lang { background: #187a48; color: #fff; width: 50px; height: 29px; line-height: 27px; border: 1px solid #ccc; display: flex; justify-content: center; margin-top: -4px; font-size: 20.500px; }
.i48 { width: 48px; height: 48px; }
.i50 { width: 50px; height: 50px; }
.i54 { width: 54px; height: 54px; }
.view { height: 737px; display: flex; overflow: hidden; font-family: "Liberation Sans", Arial, sans-serif; font-size: 24px; }
.page { width: 1325px; }
.site-header { height: 225px; background: #f5f5dc; display: flex; align-items: flex-start; padding-left: 29px; line-height: 28px; }
.h-shield { margin-top: 86px; }
.site-logo { margin: 99px 0 0 38px; width: 54px; color: #0000ee; text-decoration: underline; }
.nav { margin: 29px 0 0 101px; width: 470px; }
.nav > svg { margin-left: 188px; }
.menu { display: flex; align-items: flex-start; margin-top: 39px; }
.menu .m1 { margin: -9px 0 0 9px; width: 89px; }
.menu .m2 { margin-top: -9px; width: 92px; }
.menu .m3 { margin-top: 8px; width: 94px; }
.menu .m4 { margin: -9px 0 0 39px; }
.tools { margin: 29px 0 0 53px; width: 88px; }
.tools > svg { margin-left: 16px; }
.glyphs { display: flex; margin-top: 7px; }
.glyphs svg { width: 25px; height: 24px; }
.glyphs .g2 { width: 21px; margin-left: 6px; }
.glyphs .g3 { width: 27px; margin-left: 7px; }
.s-shield { margin: 29px 0 0 28px; }
.search { margin: 39px 0 0 13px; width: 255px; height: 32px; background: #fff; border: 1px solid #767676; border-radius: 4px; color: #757575; font-size: 20px; line-height: 31px; padding-left: 5px; }
.tag { margin: 32px 0 0 9px; }
.content { color: #000; }
.c-shield { margin: 6px 0 15px 5.500px; }
.line { display: flex; align-items: flex-start; padding-left: 9px; gap: 18px; }
.hn { font: 26px Roboto, sans-serif; fill: #fff; text-anchor: middle; letter-spacing: -1px; }
h1 { font-size: 48px; line-height: 54px; margin: -8px 0 0 -9px; }
h3 { font-size: 28px; line-height: 32px; margin: 6px 0 0 -9px; white-space: nowrap; }
.l1 { height: 56px; }
.ship { line-height: 28px; margin-top: 1px; }
.l2 { margin-top: 37px; height: 91px; }
.c-nav { margin: 0 0 39px 5.500px; }
.issues { display: flex; padding-left: 69px; height: 94px; }
.a1 { margin-left: 18px; }
.a2 { margin-left: 149px; }
.a3 { margin-left: 48px; }
.a4 { margin-left: 120px; }
.l3 h3 { letter-spacing: .060px; }
.vscroll .up { margin-top: 10px; }
.vscroll .thumb { margin-top: 9px; height: 223px; }
.down { border-top: 6px solid #505050; border-bottom: 0; margin-top: 473px; }
.code { position: absolute; left: 585px; top: 776px; width: 137px; height: 70px; text-align: center; color: #fff; font-size: 22.500px; filter: drop-shadow(8px 5px 5px rgba(0,0,0,.35)); clip-path: inset(-10px -30px 2px -10px); }
.code svg { width: 137px; height: 70px; }
.code span { position: absolute; left: 2px; right: 0; top: 38px; line-height: 30px; }

/* Windows taskbar */
.taskbar { height: 72px; flex: none; border-top: 2px solid #4d4340; display: flex; align-items: center; background: linear-gradient(90deg, #2a1c27 0, #2c1c25 25%, #302018 33%, #2e2617 48%, #33200f 62%, #381c14 75%, #371a15 88%, #341a1f 100%); color: #fff; }
.apps { display: flex; padding-left: 2px; width: 1265px; height: 70px; border-right: 2px solid #4c3c35; }
.app { width: 66.200px; height: 70px; flex: none; display: flex; align-items: center; justify-content: center; position: relative; }
.app.weather { padding-right: 3px; }
.app > svg { width: 36px; height: 36px; margin-top: -2px; }
.badge { position: absolute; left: 32px; top: 8px; min-width: 24px; height: 24px; border-radius: 12px; background: #dca0e8; color: #111; font-size: 16px; font-weight: 400; line-height: 23px; text-align: center; }
.badge.pink { background: #ff97a2; left: 30px; }
.badge.wide99 { left: 26px; width: 40px; top: 9px; }
.app .pb { position: absolute; left: 35px; top: 10px; width: 24px; height: 24px; }
.app.run::after, .app.on::after { content: ""; position: absolute; bottom: 7px; left: 28.500px; width: 9px; height: 5px; border-radius: 3px; background: #a09894; }
.app.on { width: 60.200px; height: 60px; margin: 4px 3px 0; border-radius: 6px; background: #3b3328; border: 1px solid #473e34; }
.app.on::after { width: 24px; left: 17px; bottom: 1px; background: #dca0e8; }
.apps.second { width: 138px; padding-left: 2px; }
.tray { display: flex; align-items: center; height: 70px; font-size: 17px; }
.tray svg { width: 24px; height: 24px; }
.t1 { margin-left: 35px; }
.t2 { margin-left: 24px; }
.tray .t3 { margin-left: 24px; }
.nob { margin-left: 26px; width: 63px; }
.t4 { margin-left: 1px; }
.t5 { margin-left: 12px; }
.t6 { margin-left: 12px; }
.clock { width: 111px; text-align: right; line-height: 24px; font-size: 17px; margin-top: -2px; letter-spacing: -.1px; }
.count { margin-left: 11px; width: 24px; height: 24px; border-radius: 50%; background: #dca0e8; color: #111; font-weight: 400; font-size: 16px; line-height: 23px; text-align: center; }
```
